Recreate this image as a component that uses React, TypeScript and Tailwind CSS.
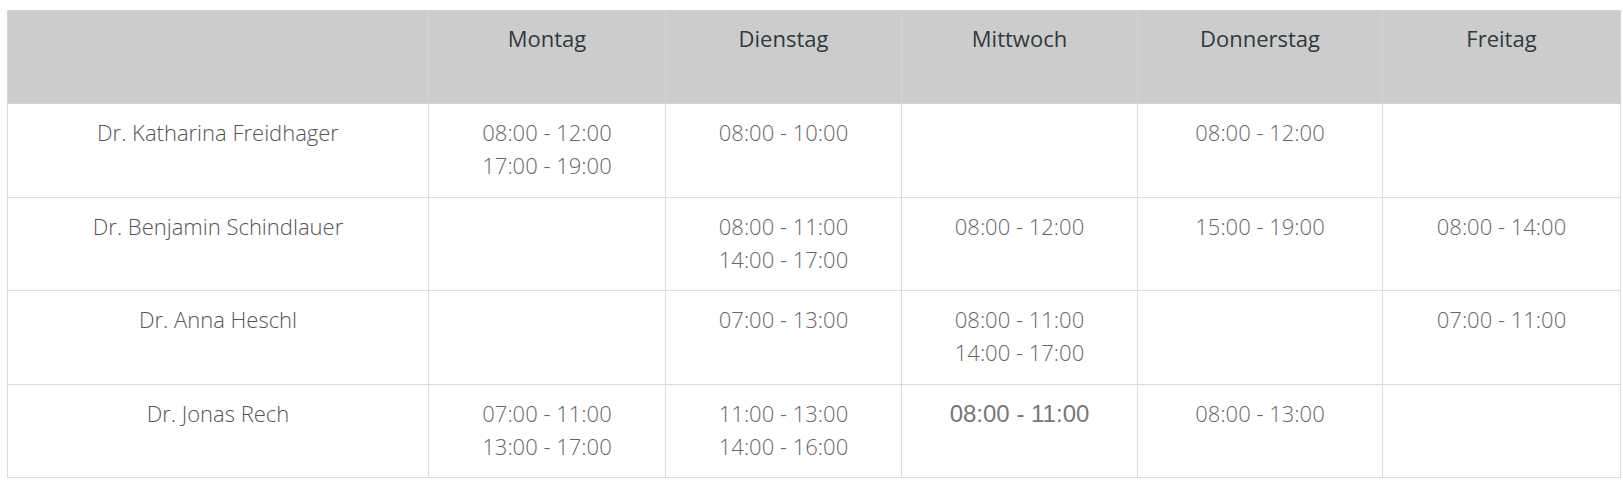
import React from 'react';

type Row = {
  name: string;
  slots: (string[] | null)[];
};

const DAYS = ['Montag', 'Dienstag', 'Mittwoch', 'Donnerstag', 'Freitag'];

const ROWS: Row[] = [
  {
    name: 'Dr. Katharina Freidhager',
    slots: [['08:00 - 12:00', '17:00 - 19:00'], ['08:00 - 10:00'], null, ['08:00 - 12:00'], null],
  },
  {
    name: 'Dr. Benjamin Schindlauer',
    slots: [null, ['08:00 - 11:00', '14:00 - 17:00'], ['08:00 - 12:00'], ['15:00 - 19:00'], ['08:00 - 14:00']],
  },
  {
    name: 'Dr. Anna Heschl',
    slots: [null, ['07:00 - 13:00'], ['08:00 - 11:00', '14:00 - 17:00'], null, ['07:00 - 11:00']],
  },
  {
    name: 'Dr. Jonas Rech',
    slots: [['07:00 - 11:00', '13:00 - 17:00'], ['11:00 - 13:00', '14:00 - 16:00'], null, ['08:00 - 13:00'], null],
  },
];

const COL_WIDTHS = ['w-[421px]', 'w-[237px]', 'w-[236px]', 'w-[236px]', 'w-[245px]', 'w-[238px]'];

const App: React.FC = () => {
  return (
    <div className="bg-white min-h-[486px] pt-[10px] pl-[7px] font-['Open_Sans',sans-serif]">
      <table className="border-collapse table-fixed w-[1613px] border border-[#dcdcdc]">
        <colgroup>
          {COL_WIDTHS.map((w, i) => (
            <col key={i} className={w} />
          ))}
        </colgroup>
        <thead>
          <tr className="bg-[#cccccc] h-[93px]">
            <th className="border border-[#d4d4d4]" />
            {DAYS.map(d => (
              <th
                key={d}
                className="border border-[#d4d4d4] align-top pt-[11px] text-[22px] leading-[33px] font-normal text-[#2f3a40] text-center"
              >
                {d}
              </th>
            ))}
          </tr>
        </thead>
        <tbody>
          {ROWS.map((r, ri) => (
            <tr key={r.name} className="h-[93.5px]">
              <td className="border border-[#dcdcdc] align-top pt-[12px] text-center text-[22px] leading-[33px] font-light text-[#555]">
                {r.name}
              </td>
              {r.slots.map((s, si) => {
                // the Mittwoch cell of the last row uses a different font in the original
                if (ri === 3 && si === 2) {
                  return (
                    <td key={si} className="border border-[#dcdcdc] align-top pt-[12px] text-center">
                      <span className="font-['Liberation_Sans',Arial,sans-serif] text-[24px] leading-[33px] text-[#777]">
                        08:00 - 11:00
                      </span>
                    </td>
                  );
                }
                return (
                  <td
                    key={si}
                    className="border border-[#dcdcdc] align-top pt-[12px] text-center text-[22px] leading-[33px] font-light text-[#666]"
                  >
                    {s?.map(t => (
                      <div key={t}>{t}</div>
                    ))}
                  </td>
                );
              })}
            </tr>
          ))}
        </tbody>
      </table>
    </div>
  );
};

export default App;
